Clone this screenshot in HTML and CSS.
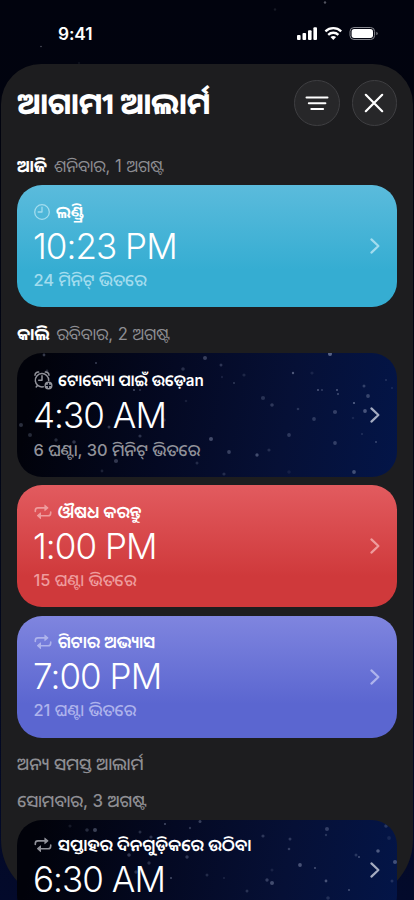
FILE: index.html
```html
<!DOCTYPE html>
<html lang="or">
<head>
<meta charset="utf-8">
<title>ଆଗାମୀ ଆଲାର୍ମ</title>
<link rel="stylesheet" href="styles.css">
</head>
<body>
<svg class="defs" width="0" height="0" aria-hidden="true">
  <symbol id="repeat" viewBox="0 0 18 16"><g fill="none" stroke="currentColor" stroke-width="1.6" stroke-linecap="round" stroke-linejoin="round"><path d="M1.3 7.4V6.5Q1.3 3.9 3.9 3.9H12"/><path d="M16.7 8V8.9Q16.7 11.7 14.1 11.7H5.5"/></g><path d="M10.4 1v5.8q0 .6.6.3l3.3-2.8q.4-.4 0-.8L11 .7q-.6-.4-.6.3zM7 8.8v5.8q0 .6-.6.3L3.1 12.1q-.4-.4 0-.8l3.3-2.8q.6-.4.6.3z" fill="currentColor"/></symbol>
  <symbol id="chevron" viewBox="0 0 12 18"><path d="M2.4 2.4 9.4 9 2.4 15.6" fill="none" stroke="currentColor" stroke-width="2.2" stroke-linecap="round" stroke-linejoin="round"/></symbol>
</svg>
<div class="phone">
  <header class="status">
    <span class="clock">9:41</span>
    <svg class="indicators" width="84" height="16" viewBox="0 0 84 16">
      <g fill="#fff"><rect x="1" y="9" width="3.6" height="5" rx="1"/><rect x="6.5" y="7" width="3.6" height="7" rx="1"/><rect x="12" y="4.2" width="3.6" height="9.8" rx="1"/><rect x="17.4" y="1.2" width="3.6" height="12.8" rx="1"/></g>
      <g fill="none" stroke="#fff" stroke-width="2.3"><path d="M29.4 5.3a11.5 11.5 0 0 1 15.8 0"/><path d="M32.2 8.8a7.4 7.4 0 0 1 10.2 0"/></g>
      <path d="M34.5 11.1a4.4 4.4 0 0 1 5.6 0L37.3 14z" fill="#fff"/>
      <rect x="54" y="1.5" width="24.6" height="12" rx="4" fill="none" stroke="#85868d"/>
      <rect x="55.6" y="3.1" width="21.4" height="8.8" rx="2.6" fill="#fff"/>
      <path d="M80.4 5.7v3.6q1.3-.5 1.3-1.8t-1.3-1.8z" fill="#85868d"/>
    </svg>
    <svg class="sky" viewBox="0 0 414 64"><g fill="#737681"><circle cx="41" cy="46.5" r=".8" opacity=".7"/><circle cx="325" cy="2.5" r="1.2" opacity=".7"/><circle cx="275" cy="9.5" r="1.2" opacity=".2"/><circle cx="79" cy="63" r="1" opacity=".15"/></g></svg>
  </header>
  <main class="sheet">
    <div class="titlebar">
      <h1>ଆଗାମୀ ଆଲାର୍ମ</h1>
      <button class="round"><svg width="24" height="16" viewBox="0 0 24 16"><path d="M1.5 2.5h21M3.8 8.3h16.6M6.3 13.9h11.8" stroke="#fff" stroke-width="2" stroke-linecap="round"/></svg></button>
      <button class="round"><svg width="20" height="20" viewBox="0 0 20 20"><path d="m1.8 1.8 16.4 16.4M18.2 1.8 1.8 18.2" stroke="#fff" stroke-width="2.2" stroke-linecap="round"/></svg></button>
    </div>

    <h2 class="day today"><b>ଆଜି</b><span>ଶନିବାର, 1 ଅଗଷ୍ଟ</span></h2>
    <article class="card cyan">
      <div class="info">
        <div class="label"><svg width="16" height="16" viewBox="0 0 16 16" fill="none" stroke="currentColor" stroke-width="1.3" stroke-linecap="round" stroke-linejoin="round"><circle cx="8" cy="8" r="7.3"/><path d="M8 3.2V8H4.2"/></svg><span>ଲଣ୍ଡ୍ରି</span></div>
        <div class="time">10:23 PM</div>
        <div class="left">24 ମିନିଟ୍ ଭିତରେ</div>
      </div>
      <svg class="chev" width="12" height="18"><use href="#chevron"/></svg>
    </article>

    <h2 class="day tomorrow"><b>କାଲି</b><span>ରବିବାର, 2 ଅଗଷ୍ଟ</span></h2>
    <article class="card night first">
      <svg class="stars" viewBox="0 0 380 124"><g fill="#98a2c0">
        <circle cx="27" cy="2" r="1.4" opacity=".5"/><circle cx="79" cy="10" r="1.1" opacity=".5"/><circle cx="188" cy="5" r="2" opacity=".5"/><circle cx="166" cy="16" r="1.8" opacity=".35"/><circle cx="30" cy="18" r="1.4" opacity=".35"/><circle cx="117" cy="37" r="1.1" opacity=".6"/><circle cx="123" cy="37" r="1" opacity=".4"/><circle cx="169" cy="48" r="1.3" opacity=".2"/><circle cx="4" cy="72" r="2" opacity=".4"/><circle cx="13" cy="82" r="2" opacity=".35"/><circle cx="39" cy="87" r="1.7" opacity=".35"/><circle cx="57" cy="89" r="1.8" opacity=".45"/><circle cx="92" cy="74" r="1.5" opacity=".4"/><circle cx="123" cy="83" r="1.6" opacity=".4"/><circle cx="147" cy="67" r="1.8" opacity=".3"/><circle cx="99" cy="108" r="2.1" opacity=".45"/><circle cx="85" cy="118" r="1.4" opacity=".25"/><circle cx="180" cy="110" r="1.5" opacity=".3"/>
        <circle cx="204" cy="12" r="1.5" opacity=".4"/><circle cx="227" cy="22" r="1.6" opacity=".25"/><circle cx="217" cy="30" r="1.1" opacity=".4"/><circle cx="205" cy="24" r="1.2" opacity=".2"/><circle cx="246" cy="45" r="2.1" opacity=".35"/><circle cx="255" cy="52" r="1.8" opacity=".4"/><circle cx="276" cy="20" r="1.2" opacity=".7"/><circle cx="295" cy="20" r="1.6" opacity=".2"/><circle cx="313" cy="1" r="2" opacity=".8"/><circle cx="301" cy="37" r="1" opacity=".7"/><circle cx="305" cy="37" r=".9" opacity=".5"/><circle cx="320" cy="37" r="1" opacity=".7"/><circle cx="321" cy="41" r="1" opacity=".6"/><circle cx="347" cy="33" r="1.5" opacity=".45"/><circle cx="351" cy="43" r="1.9" opacity=".5"/><circle cx="337" cy="50" r="1.1" opacity=".8"/><circle cx="348" cy="58" r="1.9" opacity=".65"/><circle cx="318" cy="59" r="2.1" opacity=".45"/><circle cx="297" cy="66" r="1.9" opacity=".4"/><circle cx="281" cy="56" r="1.3" opacity=".35"/><circle cx="336" cy="65" r="1.3" opacity=".2"/><circle cx="194" cy="86" r="2" opacity=".6"/><circle cx="212" cy="99" r="1.9" opacity=".5"/><circle cx="240" cy="102" r="1.7" opacity=".6"/><circle cx="252" cy="97" r="1.6" opacity=".3"/><circle cx="272" cy="82" r="1.9" opacity=".4"/><circle cx="318" cy="90" r="1.9" opacity=".45"/><circle cx="337" cy="119" r="1.9" opacity=".6"/><circle cx="207" cy="121" r="1.6" opacity=".3"/><circle cx="272" cy="119" r="1.8" opacity=".15"/><circle cx="359" cy="89" r="1.1" opacity=".5"/><circle cx="345" cy="81" r="1" opacity=".3"/><circle cx="369" cy="27" r="1.1" opacity=".3"/><circle cx="375" cy="35" r="1" opacity=".25"/>
      </g></svg>
      <div class="info">
        <div class="label"><svg width="19" height="19" viewBox="0 0 19 19" fill="none" stroke="currentColor" stroke-width="1.5" stroke-linecap="round" stroke-linejoin="round"><path d="M9.3 15.8a6.7 6.7 0 1 1 5.4-6.4M8 4.8v4.5H4.7M1 4.3A3.2 3.2 0 0 1 4.6 1.1M11.4 1.1A3.2 3.2 0 0 1 15 4.3M3.6 14.2 2.2 16"/><circle cx="14.5" cy="14.4" r="4" fill="currentColor" stroke="none"/><path d="M14.5 12.3v4.2M12.4 14.4h4.2" stroke="#030716" stroke-width="1.2"/></svg><span>ଟୋକ୍ୟୋ ପାଇଁ ଉଡ଼େ<span class="latin">an</span></span></div>
        <div class="time">4:30 AM</div>
        <div class="left">6 ଘଣ୍ଟା, 30 ମିନିଟ୍ ଭିତରେ</div>
      </div>
      <svg class="chev" width="12" height="18"><use href="#chevron"/></svg>
    </article>
    <article class="card red">
      <div class="info">
        <div class="label"><svg width="18" height="16"><use href="#repeat"/></svg><span>ଔଷଧ କରନ୍ତୁ</span></div>
        <div class="time">1:00 PM</div>
        <div class="left">15 ଘଣ୍ଟା ଭିତରେ</div>
      </div>
      <svg class="chev" width="12" height="18"><use href="#chevron"/></svg>
    </article>
    <article class="card violet">
      <div class="info">
        <div class="label"><svg width="18" height="16"><use href="#repeat"/></svg><span>ଗିଟାର ଅଭ୍ୟାସ</span></div>
        <div class="time">7:00 PM</div>
        <div class="left">21 ଘଣ୍ଟା ଭିତରେ</div>
      </div>
      <svg class="chev" width="12" height="18"><use href="#chevron"/></svg>
    </article>

    <h2 class="day others"><span>ଅନ୍ୟ ସମସ୍ତ ଆଲାର୍ମ</span></h2>
    <h2 class="day monday"><span>ସୋମବାର, 3 ଅଗଷ୍ଟ</span></h2>
    <article class="card night last">
      <svg class="stars" viewBox="0 0 380 124"><g fill="#98a2c0">
        <circle cx="70" cy="10" r="1.8" opacity=".35"/><circle cx="78" cy="10" r="2" opacity=".55"/><circle cx="53" cy="6" r="1.6" opacity=".2"/><circle cx="123" cy="12" r="1.5" opacity=".35"/><circle cx="148" cy="4" r="1.1" opacity=".6"/><circle cx="183" cy="1.5" r="1.5" opacity=".5"/><circle cx="173" cy="8" r="1.2" opacity=".4"/><circle cx="134" cy="17" r="1.6" opacity=".4"/><circle cx="112" cy="35" r="1.8" opacity=".45"/><circle cx="170" cy="37" r="1.7" opacity=".45"/><circle cx="119" cy="52" r="1.7" opacity=".4"/><circle cx="132" cy="43" r="1.7" opacity=".35"/><circle cx="154" cy="58" r="1.1" opacity=".6"/><circle cx="246" cy="16" r="1.6" opacity=".4"/><circle cx="273" cy="19" r="1.5" opacity=".4"/><circle cx="272" cy="29" r="1.3" opacity=".45"/><circle cx="310" cy="9" r="2" opacity=".45"/><circle cx="309" cy="15" r="1.2" opacity=".35"/><circle cx="369" cy="6" r="1.8" opacity=".35"/><circle cx="372" cy="18" r="1.9" opacity=".2"/><circle cx="361" cy="31" r="1.8" opacity=".7"/><circle cx="339" cy="35" r="1.5" opacity=".35"/><circle cx="342" cy="37" r="1.1" opacity=".6"/><circle cx="378" cy="42" r="2" opacity=".6"/><circle cx="283" cy="45" r="1.9" opacity=".65"/><circle cx="298" cy="48" r="1.1" opacity=".6"/><circle cx="255" cy="50" r="1.5" opacity=".2"/><circle cx="250" cy="60" r="1.7" opacity=".45"/><circle cx="255" cy="63" r="2" opacity=".6"/><circle cx="309" cy="61" r="1.4" opacity=".65"/><circle cx="332" cy="70" r="1.1" opacity=".6"/><circle cx="375" cy="61" r="1.5" opacity=".3"/><circle cx="230" cy="71" r="1.5" opacity=".35"/><circle cx="311" cy="78" r="1.8" opacity=".3"/><circle cx="190" cy="55" r="1.5" opacity=".3"/><circle cx="207" cy="58" r="1" opacity=".25"/>
      </g></svg>
      <div class="info">
        <div class="label"><svg width="18" height="16"><use href="#repeat"/></svg><span>ସପ୍ତାହର ଦିନଗୁଡ଼ିକରେ ଉଠିବା</span></div>
        <div class="time">6:30 AM</div>
      </div>
      <svg class="chev" width="12" height="18"><use href="#chevron"/></svg>
    </article>
  </main>
</div>
</body>
</html>
```
FILE: styles.css
```css
* { box-sizing: border-box; }
html, body { margin: 0; height: 900px; overflow: hidden; background: #01030e; }
body { font-family: Inter, "Noto Sans Oriya", "Noto Sans", sans-serif; color: #fff; }
.defs { position: absolute; }
.phone { width: 414px; height: 900px; overflow: hidden; background: linear-gradient(#01030e 0, #01030f 20%, #020719 60%, #030a2b); }
.status { position: relative; height: 64px; display: flex; justify-content: space-between; align-items: flex-start; padding: 26px 34.5px 0 58px; }
.sky { position: absolute; inset: 0; width: 414px; height: 64px; }
.clock { font-size: 17.3px; line-height: 16px; font-weight: 600; letter-spacing: -.1px; }
.indicators { flex: none; }
.sheet { height: 836px; margin: 0 1px; padding: 15px 16px 0; background: #1d1d1f; border-radius: 40px 40px 60px 60px; }
.titlebar { height: 48px; display: flex; align-items: center; gap: 12px; }
h1 { flex: 1; margin: 0; font-size: 29.8px; line-height: 47px; font-weight: 800; white-space: nowrap; }
.round { flex: none; width: 45.5px; height: 45.5px; padding: 0; border: 1px solid #3f3f42; border-radius: 50%; background: #272729; display: flex; align-items: center; justify-content: center; }
.day { display: flex; gap: 7px; align-items: center; margin: 0; height: 20px; line-height: 20px; font-size: 16.6px; font-weight: 400; color: #8e8e93; white-space: nowrap; }
.day b { color: #fff; font-weight: 700; }
.today { margin: 29.4px 0 9px; }
.tomorrow { margin: 16.6px 0 9.2px; }
.others { margin: 16.4px 0 17px; font-size: 17.1px; font-weight: 500; }
.monday { margin-bottom: 8.6px; font-size: 16.8px; font-weight: 500; }
.card { position: relative; height: 122px; border-radius: 25px; overflow: hidden; display: flex; align-items: center; justify-content: space-between; padding: 0 16px 0 17px; margin-bottom: 8.2px; }
.info { position: relative; align-self: flex-start; padding-top: 16.4px; }
.label { display: flex; align-items: center; gap: 6px; height: 20px; line-height: 20px; font-size: 16.8px; font-weight: 600; white-space: nowrap; }
.label svg { flex: none; }
.first .label { gap: 5px; font-size: 15.9px; }
.first .info { padding-top: 17.4px; }
.first .left { margin-top: 5px; }
.latin { font-size: 15.2px; }
.time { margin-top: 4px; margin-left: -1px; height: 40px; line-height: 40px; font-size: 35px; font-weight: 350; letter-spacing: -.95px; white-space: nowrap; }
.left { margin-top: 4px; margin-left: -.5px; height: 20px; line-height: 20px; font-size: 16.4px; font-weight: 500; white-space: nowrap; }
.chev { position: relative; flex: none; }
.stars { position: absolute; inset: 0; width: 380px; height: 124px; filter: blur(.5px); opacity: .7; }
.cyan { background: linear-gradient(#5bbbdc, #35add2 70%); }
.cyan .left, .cyan .label svg, .cyan .chev { color: #a2dcee; }
.night { height: 124px; background: linear-gradient(100deg, #01020a 5%, #040923 40%, #061036 70%, #031548); }
.night .left, .night .label svg { color: #91929a; }
.night .chev { color: #a4abc0; }
.last { height: 100px; }
.last .info { padding-top: 15.6px; }
.red { background: linear-gradient(#e25b5f, #cf393b 75%); }
.red .left, .red .label svg, .red .chev { color: #ee9c9d; }
.violet { background: linear-gradient(#7f85df, #5b66d0 72%); }
.violet .left, .violet .label svg, .violet .chev { color: #aeb3ec; }
```
